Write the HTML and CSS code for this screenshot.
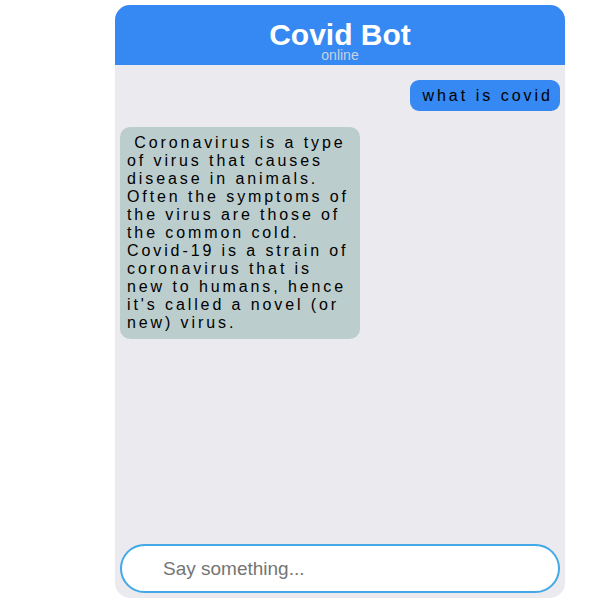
FILE: index.html
```html
<!DOCTYPE html>
<html>
<head>
<meta charset="utf-8">
<link rel="stylesheet" href="styles.css">
</head>
<body>
<div class="chat">
  <div class="chat-header">
    <div class="chat-title">Covid Bot</div>
    <div class="chat-status">online</div>
  </div>
  <div class="chat-body">
    <div class="msg msg-user">what is covid</div>
    <div class="msg msg-bot">&nbsp;Coronavirus is a type of virus that causes disease in animals. Often the symptoms of the virus are those of the common cold. Covid-19 is a strain of coronavirus that is new to humans, hence it's called a novel (or new) virus.</div>
  </div>
  <div class="chat-footer">
    <input class="chat-input" type="text" placeholder="Say something..." autofocus>
  </div>
</div>
</body>
</html>
```

FILE: styles.css
```css
html, body {
  margin: 0;
  padding: 0;
  background: #ffffff;
  font-family: "Liberation Sans", Arial, sans-serif;
}
.chat {
  box-sizing: border-box;
  width: 450px;
  height: 593px;
  margin: 5px 0 0 115px;
  background: #ebeaef;
  border-radius: 15px;
  overflow: hidden;
  display: flex;
  flex-direction: column;
}
.chat-header {
  box-sizing: border-box;
  height: 60px;
  padding-top: 15px;
  background: #3688f2;
  text-align: center;
}
.chat-title {
  font-size: 30px;
  font-weight: bold;
  line-height: 29px;
  color: #ffffff;
}
.chat-status {
  font-size: 14px;
  line-height: 12px;
  color: #c9d3e4;
}
.chat-body {
  flex: 1;
  display: flex;
  flex-direction: column;
  padding: 15px 5px 0 5px;
}
.msg {
  font-size: 16px;
  line-height: 18px;
  color: #000000;
}
.msg-user {
  align-self: flex-end;
  background: #3688f2;
  border-radius: 9px;
  padding: 7px 7px 6px 12px;
  letter-spacing: 3px;
}
.msg-bot {
  align-self: flex-start;
  box-sizing: border-box;
  width: 240px;
  margin-top: 16px;
  background: #bccdcd;
  border-radius: 10px;
  padding: 7px 5px 7px 7px;
  letter-spacing: 2.9px;
}
.chat-footer {
  padding: 0 5px 5px 5px;
}
.chat-input {
  box-sizing: border-box;
  display: block;
  width: 100%;
  height: 49px;
  margin: 0;
  padding: 0 20px 0 41px;
  border: 2px solid #42a8e6;
  border-radius: 25px;
  background: #ffffff;
  font-family: "Liberation Sans", Arial, sans-serif;
  font-size: 19px;
  color: #222222;
  outline: none;
}
.chat-input::placeholder {
  color: #757575;
}
```
